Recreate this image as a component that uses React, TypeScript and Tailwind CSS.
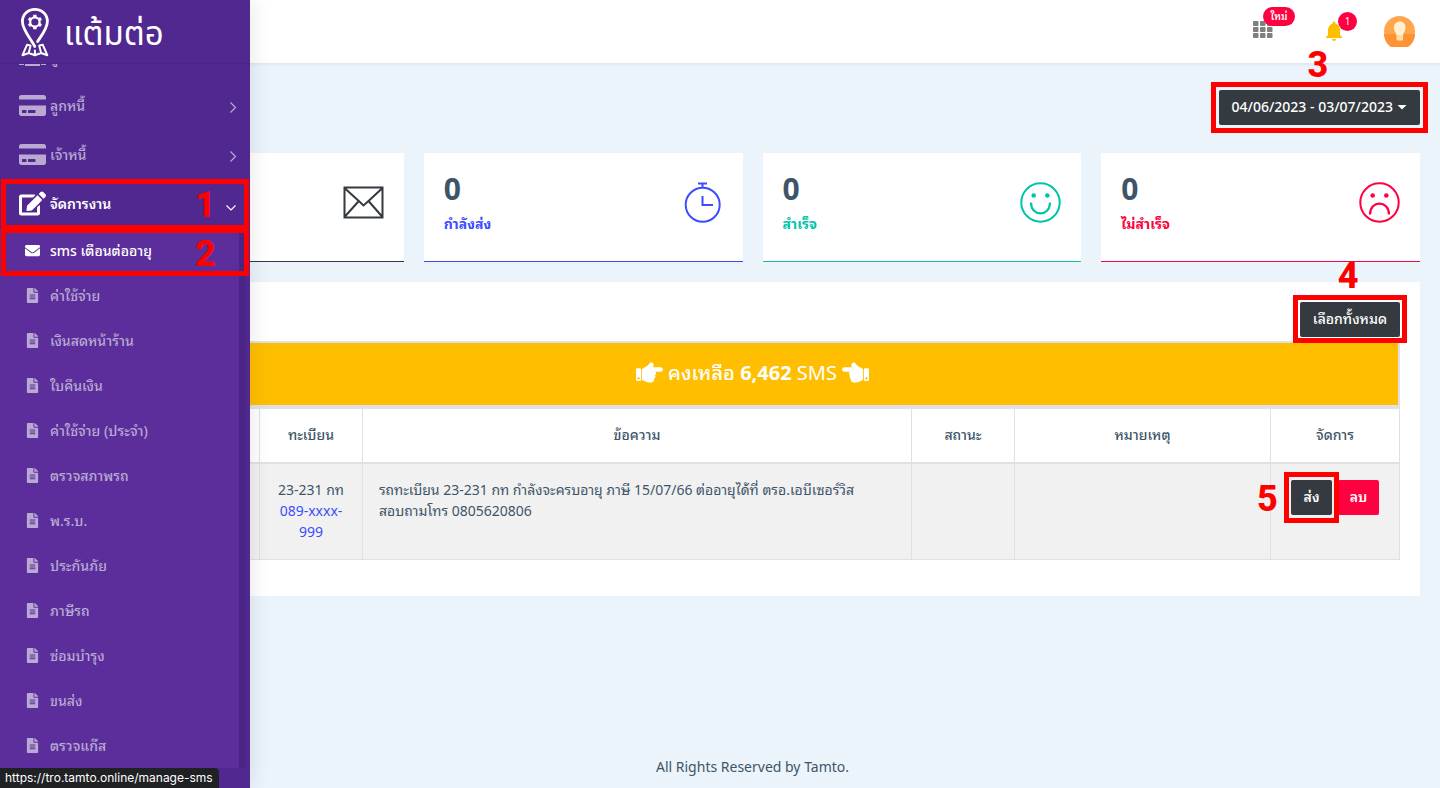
import React from 'react';
import { FaCreditCard, FaEdit, FaEnvelope, FaFileAlt, FaHandPointLeft, FaHandPointRight } from 'react-icons/fa';

const subMenus = [
  'ค่าใช้จ่าย',
  'เงินสดหน้าร้าน',
  'ใบคืนเงิน',
  'ค่าใช้จ่าย (ประจำ)',
  'ตรวจสภาพรถ',
  'พ.ร.บ.',
  'ประกันภัย',
  'ภาษีรถ',
  'ซ่อมบำรุง',
  'ขนส่ง',
  'ตรวจแก๊ส',
];

const Logo = () => (
  <svg width="30" height="50" viewBox="0 0 30 50" fill="none" stroke="white" strokeWidth="2.8" strokeLinecap="round" strokeLinejoin="round">
    <path d="M14.800 39.500C11 32 2.400 23 2.400 14.500C2.400 7.400 8 2.400 14.900 2.400S27.400 7.400 27.400 14.500C27.400 21.500 21.500 28.500 17.600 34.500" />
    <circle cx="14.900" cy="15" r="4.700" strokeWidth="2.200" />
    <path d="M14.900 10.200V7.800M14.900 19.800v2.400M10.700 12.600l-2-1.200M19.100 12.600l2-1.200M10.700 17.400l-2 1.200M19.100 17.400l2 1.200" strokeWidth="3.400" strokeLinecap="butt" />
    <path d="M10.500 38.500L7 37.800L2.500 48.200L8.800 46L14.900 48.200L21 46L27.300 48.200L22.800 37.800L19.300 38.500M10.500 39L8.800 45.500M19.300 39L21 45.500M14.900 43.500V47.500" strokeWidth="2" />
  </svg>
);

const CustomersIcon = () => (
  <svg width="27" height="18" viewBox="0 0 27 18" fill="currentColor">
    <circle cx="13.500" cy="4" r="4" />
    <circle cx="4.500" cy="5.500" r="2.700" />
    <circle cx="22.500" cy="5.500" r="2.700" />
    <path d="M6 18v-3c0-3.500 3-5.500 7.500-5.500S21 11.500 21 15v3zM0 17v-3.500C0 11 2 9.500 5 9.500c.8 0 1.500.1 2.100.3C5.600 11.200 5 12.800 5 14.500V17zM27 17v-3.500c0-2.500-2-4-5-4-.8 0-1.500.1-2.100.3 1.500 1.400 2.100 3 2.100 4.700V17z" />
  </svg>
);

const Chevron = ({ down }: { down?: boolean }) => (
  <svg width="12" height="16" viewBox="0 0 12 16" fill="none" stroke="currentColor" strokeWidth="1.200" className="ml-auto">
    <path d={down ? 'M1.500 9.500l4.500 4.500L10.500 9.500' : 'M3.500 4.500l5 5-5 5'} />
  </svg>
);

const MailIcon = () => (
  <svg width="41" height="41" viewBox="0 0 41 41" fill="none" stroke="currentColor" strokeWidth="2">
    <path d="M1.500 5.500h38v30h-38zM1.500 6L15.800 19l4.700 4.500L25.500 19 39.500 6M1.500 35L15.800 19M39.500 35L25.500 19" />
  </svg>
);

const TimerIcon = () => (
  <svg width="41" height="41" viewBox="0 0 41 41" fill="none" stroke="currentColor" strokeWidth="2">
    <circle cx="20.700" cy="22.700" r="17" />
    <path d="M16 1.500h9M20.500 1.500v4.500M20.500 14v9h10.500" />
  </svg>
);

const FaceIcon = ({ sad }: { sad?: boolean }) => (
  <svg width="41" height="41" viewBox="0 0 41 41" fill="none" stroke="currentColor" strokeWidth="2">
    <circle cx="20.500" cy="20.500" r="19.200" />
    <circle cx="13.700" cy="13.500" r="2.300" fill="currentColor" stroke="none" />
    <circle cx="27.300" cy="13.500" r="2.300" fill="currentColor" stroke="none" />
    <path d={sad ? 'M11 32.500c0-14.500 19-14.500 19 0' : 'M11 20.500c0 14.500 19 14.500 19 0'} strokeWidth="2.200" />
  </svg>
);

const stats = [
  { label: 'กำลังส่ง', color: 'text-[#3c4cff] border-[#3c4cdd]', icon: <TimerIcon /> },
  { label: 'สำเร็จ', color: 'text-[#00c5aa] border-[#16bfa3]', icon: <FaceIcon /> },
  { label: 'ไม่สำเร็จ', color: 'text-[#ff0041] border-[#ee0a48]', icon: <FaceIcon sad /> },
];

// red frame and number of a tutorial step
const Step = ({ frame, no, place }: { frame: string; no: number; place: string }) => (
  <>
    <span className={`pointer-events-none absolute border-5 border-[#ff0000] ${frame}`} />
    <span className={`pointer-events-none absolute text-4xl leading-9 font-extrabold text-[#ff0000] font-['Roboto','Liberation_Sans',sans-serif] ${place}`}>{no}</span>
  </>
);

const Sidebar = () => (
  <div className="relative z-10 flex h-full w-[250px] flex-col bg-[#502890] shadow-[1px_0_20px_rgba(0,0,0,0.1)]">
    <a href="#" className="flex h-[63px] items-center gap-3.5 pl-5 text-white">
      <Logo />
      <span className="pt-2 text-[33px] leading-none font-normal font-['Noto_Sans_Thai','Noto_Sans',sans-serif]">แต้มต่อ</span>
    </a>
    <nav className="flex-1 overflow-hidden border-t border-[#4b2588] font-medium text-[#b9a9d3]">
      <ul className="-mt-8">
        <li>
          <a href="#" className="flex h-[49px] items-center gap-1 pr-[11px] pl-[19px]"><CustomersIcon />ลูกค้า<Chevron /></a>
        </li>
        <li>
          <a href="#" className="flex h-[49px] items-center gap-1 pr-[11px] pl-[19px]"><FaCreditCard size={27} />ลูกหนี้<Chevron /></a>
        </li>
        <li>
          <a href="#" className="flex h-[49px] items-center gap-1 pr-[11px] pl-[19px]"><FaCreditCard size={27} />เจ้าหนี้<Chevron /></a>
        </li>
        <li className="relative z-10">
          <a href="#" className="flex h-[49px] items-center gap-1 pr-[13px] pl-[19px] font-semibold text-white"><FaEdit size={27} />จัดการงาน<Chevron down /></a>
          <Step frame="inset-x-px top-0 -bottom-0.5" no={1} place="top-2 left-[195px]" />
        </li>
      </ul>
      <ul className="mr-[5px] border-r-6 border-[#4a2585] bg-[#5b2e9b]">
        <li className="relative -mr-[11px]">
          <a href="#" className="flex h-[45px] items-center gap-[10px] pl-[25px] font-medium text-white"><FaEnvelope size={15} />sms เตือนต่ออายุ</a>
          <Step frame="inset-x-px top-0 -bottom-[3px]" no={2} place="top-2 left-[195px]" />
        </li>
        {subMenus.map(name => (
          <li key={name}>
            <a href="#" className="flex h-[45px] items-center gap-[10px] pl-[25px]"><FaFileAlt size={15} />{name}</a>
          </li>
        ))}
      </ul>
    </nav>
  </div>
);

const Header = () => (
  <header className="relative flex h-[63px] items-center justify-end bg-white pr-[25px] shadow-[0_1px_4px_rgba(0,0,0,0.08)]">
    <button type="button" aria-label="apps" className="relative mr-[49px] pb-1 text-[#808080]">
      <svg width="20" height="18" viewBox="0 0 20 18" fill="currentColor">
        {[0, 7, 14].map(x => [0, 6, 12].map(y => <rect key={`${x}-${y}`} x={x} y={y} width="5.500" height="5" rx="0.800" />))}
      </svg>
      <span className="absolute -top-3.5 left-2.5 flex h-[19px] w-8 items-center justify-center rounded-full bg-[#ff0041] text-[10px] font-semibold text-white">ใหม่</span>
    </button>
    <button type="button" aria-label="notifications" className="relative mr-[38px] pb-0.5 text-[#ffbf00]">
      <svg width="24" height="24" viewBox="0 0 24 24" fill="currentColor">
        <path d="M12 22c1.100 0 2-.9 2-2h-4c0 1.100.89 2 2 2zm6-6v-5c0-3.070-1.640-5.640-4.500-6.320V4c0-.83-.67-1.500-1.500-1.500s-1.500.67-1.500 1.500v.68C7.630 5.360 6 7.920 6 11v5l-2 2v1h16v-1l-2-2z" />
      </svg>
      <span className="absolute -top-[7px] left-4 flex size-[19px] items-center justify-center rounded-full bg-[#ff0041] text-[10px] text-white">1</span>
    </button>
    <button type="button" aria-label="profile">
      <svg width="31" height="31" viewBox="0 0 31 31">
        <circle cx="15.500" cy="15.500" r="15.500" fill="#ffa64d" />
        <path d="M0 18h31a15.500 15.500 0 0 1-31 0z" fill="#ff9233" />
        <path d="M12.500 18h6.500v5.500a1 1 0 0 1-1 1h-4.500a1 1 0 0 1-1-1z" fill="#ffdea8" />
        <path d="M15.700 5.500c3.500 0 5.800 2.400 5.800 6 0 3.200-1.800 4.700-2.500 7.500h-6.600c-.7-2.800-2.500-4.300-2.500-7.500 0-3.600 2.300-6 5.800-6z" fill="#fff0cf" />
      </svg>
    </button>
  </header>
);

export default function App() {
  return (
    <div className="flex min-h-screen bg-[#ecf4fb] text-sm leading-[21px] text-[#3e5569] font-['Noto_Sans','Noto_Sans_Thai_Looped','Noto_Looped_Thai','Loma','Sarabun','Garuda',sans-serif]">
      {/* collapsed rail, the opened menu lies over the page */}
      <aside className="w-[65px] shrink-0">
        <Sidebar />
      </aside>

      <div className="flex min-w-0 flex-1 flex-col">
        <Header />
        <main className="flex-1 px-5 pt-[27px]">
          <div className="mb-7 flex justify-end">
            <div className="relative">
              <button type="button" className="flex h-[35px] items-center gap-1 rounded-xs bg-[#343a40] px-[13px] pb-0.5 font-medium text-white">
                04/06/2023 - 03/07/2023
                <svg width="10" height="7" viewBox="0 0 10 7" fill="currentColor"><path d="M0.500 2h9L5 6.500z" /></svg>
              </button>
              <Step frame="-inset-2" no={3} place="-top-[43px] left-[89px]" />
            </div>
          </div>

          <div className="mb-5 grid grid-cols-4 gap-5">
            <div className="flex h-[109px] justify-end border-b border-[#343a40] bg-white px-5 pt-[29px] text-[#343a40]">
              <MailIcon />
            </div>
            {stats.map(item => (
              <div key={item.label} className={`flex h-[109px] justify-between border-b bg-white px-5 pt-[29px] ${item.color}`}>
                <div className="-mt-[9px]">
                  <h2 className="text-3xl leading-8 font-bold text-[#3e5569]">0</h2>
                  <h6 className="mt-2 font-bold">{item.label}</h6>
                </div>
                {item.icon}
              </div>
            ))}
          </div>

          <div className="bg-white px-5 pt-5 pb-9">
            <div className="mb-1 flex justify-end">
              <div className="relative">
                <button type="button" className="h-[35px] rounded-xs bg-[#343a40] px-[13px] pb-0.5 font-medium text-white">เลือกทั้งหมด</button>
                <Step frame="-inset-x-[7px] -top-[7px] -bottom-1.5" no={4} place="-top-11 left-[38px]" />
              </div>
            </div>
            <div className="flex h-[66px] items-center justify-center gap-[5px] border-2 border-[#dee2e6] bg-[#ffbf00] pb-[3px] text-xl text-white">
              <FaHandPointRight size={27} />
              <span className="font-medium">คงเหลือ <b>6,462</b> <span className="font-normal">SMS</span></span>
              <FaHandPointLeft size={27} />
            </div>
            <table className="w-full table-fixed border-separate border-spacing-0 border-t-2 border-[#dee2e6]">
              <thead>
                <tr className="[&>th]:border-r [&>th]:border-b-2 [&>th]:border-[#dee2e6] [&>th]:pt-[15px] [&>th]:pb-[17px] [&>th]:font-medium">
                  <th className="w-[155px] border-l"></th>
                  <th className="w-[103px]">ทะเบียน</th>
                  <th>ข้อความ</th>
                  <th className="w-[103px]">สถานะ</th>
                  <th className="w-[256px]">หมายเหตุ</th>
                  <th className="w-[129px]">จัดการ</th>
                </tr>
              </thead>
              <tbody>
                <tr className="bg-[#f1f1f1] align-top [&>td]:border-r [&>td]:border-b [&>td]:border-[#dee2e6] [&>td]:px-4 [&>td]:pt-[15px] [&>td]:pb-[17px]">
                  <td className="border-l"></td>
                  <td className="text-center">
                    <div className="-mx-2">23-231 กท</div>
                    <a href="#" className="text-[#3c4cff]">089-xxxx-<br />999</a>
                  </td>
                  <td>รถทะเบียน 23-231 กท กำลังจะครบอายุ ภาษี 15/07/66 ต่ออายุได้ที่ ตรอ.เอบีเซอร์วิส<br />สอบถามโทร 0805620806</td>
                  <td></td>
                  <td></td>
                  <td>
                    <div className="flex justify-center gap-1.5 pt-px font-semibold text-white">
                      <div className="relative z-10">
                        <button type="button" className="h-[35px] w-[41px] rounded-xs bg-[#343a40] pb-0.5">ส่ง</button>
                        <Step frame="-inset-x-[7px] -inset-y-2" no={5} place="top-px -left-[34px]" />
                      </div>
                      <button type="button" className="h-[35px] w-[41px] rounded-xs bg-[#ff0041] pb-0.5">ลบ</button>
                    </div>
                  </td>
                </tr>
              </tbody>
            </table>
          </div>
        </main>
        <footer className="pb-[11px] text-center">All Rights Reserved by Tamto.</footer>
      </div>

      <div className="fixed bottom-0 left-0 z-20 h-5 rounded-tr bg-[#202124] pr-1.5 pl-[5px] text-xs leading-5 text-white font-['Inter',sans-serif]">https://tro.tamto.online/manage-sms</div>
    </div>
  );
}
